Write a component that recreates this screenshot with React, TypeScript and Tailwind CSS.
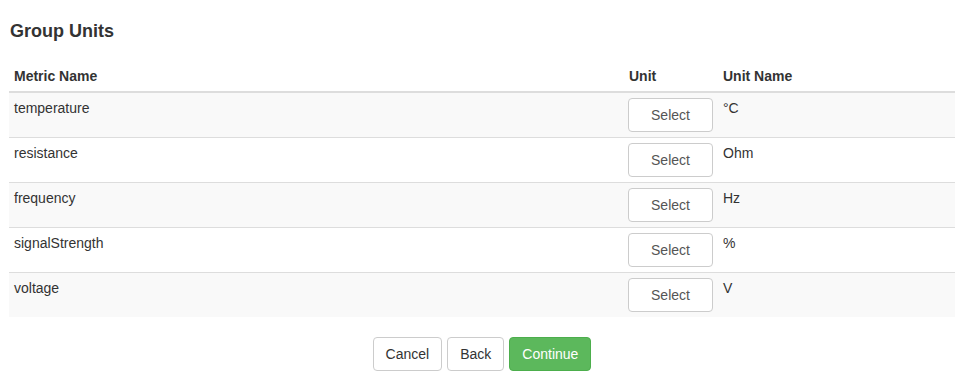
const rows = [
  { metric: "temperature", unit: "°C" },
  { metric: "resistance", unit: "Ohm" },
  { metric: "frequency", unit: "Hz" },
  { metric: "signalStrength", unit: "%" },
  { metric: "voltage", unit: "V" },
];

const btn =
  "h-[34px] rounded-[4px] border px-3 text-[14px] leading-5 cursor-pointer";

export default function App() {
  return (
    <div className="min-h-screen bg-white px-[9px] pt-[21px] font-['Liberation_Sans',Arial,sans-serif] text-[14px] leading-5 text-[#333]">
      <h4 className="pl-px text-[18px] font-bold leading-5">Group Units</h4>

      <div className="mt-5">
        <div className="grid grid-cols-[1fr_94px_237px] border-b-2 border-[#ddd] font-bold">
          <div className="p-[5px]">Metric Name</div>
          <div className="p-[5px]">Unit</div>
          <div className="p-[5px]">Unit Name</div>
        </div>
        {rows.map((r, i) => (
          <div
            key={r.metric}
            className={`grid grid-cols-[1fr_94px_237px] ${i > 0 ? "border-t border-[#ddd]" : ""} ${i % 2 === 0 ? "bg-[#f9f9f9]" : "bg-white"}`}
          >
            <div className="p-[5px]">{r.metric}</div>
            <div className="p-[5px]">
              <button type="button" className={`${btn} -ml-px w-[85px] border-[#ccc] bg-white text-[#555]`}>
                Select
              </button>
            </div>
            <div className="p-[5px]">{r.unit}</div>
          </div>
        ))}
      </div>

      <div className="mt-5 flex justify-center gap-[5px]">
        <button type="button" className={`${btn} border-[#ccc] bg-white text-[#333]`}>
          Cancel
        </button>
        <button type="button" className={`${btn} border-[#ccc] bg-white text-[#333]`}>
          Back
        </button>
        <button type="button" className={`${btn} border-[#4cae4c] bg-[#5cb85c] text-white`}>
          Continue
        </button>
      </div>
    </div>
  );
}
